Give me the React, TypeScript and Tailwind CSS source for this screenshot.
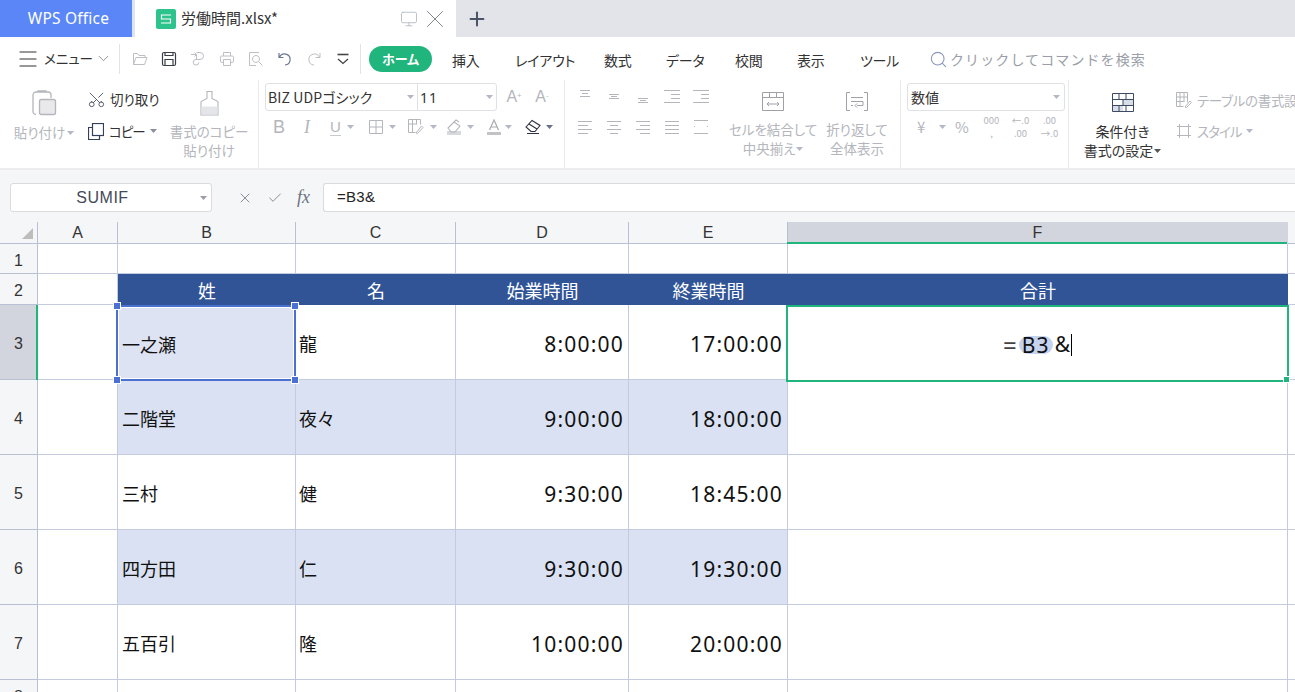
import type { ReactNode } from 'react';
import { Menu, ChevronDown, Monitor, X, Plus, Search, Check, Scissors } from 'lucide-react';

const muted = 'text-[#b4b6bc]';

function Ic({ w = 18, h = 18, children, className = '' }: { w?: number; h?: number; children: ReactNode; className?: string }) {
  return (
    <svg width={w} height={h} viewBox={`0 0 ${w} ${h}`} fill="none" stroke="currentColor" strokeWidth="1" className={`shrink-0 ${className}`}>
      {children}
    </svg>
  );
}

function Caret({ className = 'text-[#b4b8c6]' }: { className?: string }) {
  return (
    <svg width="7" height="4" viewBox="0 0 7 4" className={`shrink-0 ${className}`}>
      <path d="M0 0h7L3.5 4z" fill="currentColor" />
    </svg>
  );
}

function AlignIcon({ lines }: { lines: [number, number, number][] }) {
  return (
    <Ic w={18} h={16}>
      {lines.map(([x1, x2, y], i) => (
        <path key={i} d={`M${x1} ${y}.5H${x2}`} />
      ))}
    </Ic>
  );
}

function QuickBar() {
  return (
    <div className="flex items-center h-[43px] pl-[16px] shrink-0">
      <Menu size={24} strokeWidth={1.2} className="text-[#333]" />
      <span className="ml-[4px] text-[13.5px] text-[#333] w-[45px]">メニュー</span>
      <ChevronDown size={17} strokeWidth={1.1} className="ml-[6px] text-[#777]" />
      <div className="ml-[7px] w-px h-[30px] bg-[#e2e3e6]" />
      <div className="flex items-center gap-[13px] ml-[12px] text-[#bdbfc4]">
        <Ic w={16} h={16}>
          <path d="M1.500 13.500v-11h4l1.500 2h6v2M1.500 13.500l2.500-7h11l-2.500 7z" />
        </Ic>
        <Ic w={16} h={16} className="text-[#3a3d45]">
          <path d="M3 1.500h10a1.500 1.500 0 0 1 1.500 1.500v10a1.500 1.500 0 0 1-1.500 1.500H3A1.500 1.500 0 0 1 1.500 13V3A1.500 1.500 0 0 1 3 1.500zM4 14.500V8.500h8v6M4 1.500v3h8v-3" strokeWidth="1.200" />
        </Ic>
        <Ic w={16} h={16}>
          <path d="M1 3.500h5M4.500 1.500l2 2-2 2M6.500 1.500h3.500a3.500 3.500 0 0 1 0 7H6a2.800 2.800 0 1 0 2.800 2.800M6.500 3.500v5" />
        </Ic>
        <Ic w={16} h={16}>
          <path d="M4.500 5V1.500h7V5M4 11.500H2.800A1.300 1.300 0 0 1 1.500 10.200V6.300A1.300 1.300 0 0 1 2.800 5h10.400a1.300 1.300 0 0 1 1.300 1.300v3.900a1.300 1.300 0 0 1-1.300 1.300H12M4.500 8.500h7v6h-7z" />
        </Ic>
        <Ic w={16} h={16}>
          <path d="M11 1.500H1.500v13H8M8 4.500a3.500 3.500 0 1 0 .01 0zM10.500 10.500l4 4" />
        </Ic>
        <Ic w={16} h={16} className="text-[#6b7690]">
          <path d="M2 2v4.500h4.500M2.500 6.500A5.500 5.500 0 1 1 8 14" strokeWidth="1.200" />
        </Ic>
        <Ic w={16} h={16}>
          <path d="M14 2v4.500H9.500M13.500 6.500A5.500 5.500 0 1 0 8 14" />
        </Ic>
        <Ic w={16} h={16} className="text-[#444]">
          <path d="M2.500 3.500h11" strokeWidth="1.600" />
          <path d="M3 8l5 4.500L13 8" strokeWidth="1.300" />
        </Ic>
      </div>
      <div className="ml-[9px] w-px h-[30px] bg-[#e2e3e6]" />
      <div className="ml-[8px] w-[63px] h-[26px] rounded-full bg-[#1fb57c] text-white text-[13px] font-bold flex items-center justify-center">
        ホーム
      </div>
      <nav className="flex items-center ml-[20px] pt-[3px] text-[14px] text-[#333] tracking-[-0.2px]">
        <span className="w-[63px]">挿入</span>
        <span className="w-[89px]">レイアウト</span>
        <span className="w-[62px]">数式</span>
        <span className="w-[69px]">データ</span>
        <span className="w-[62px]">校閲</span>
        <span className="w-[63px]">表示</span>
        <span className="w-[70px]">ツール</span>
      </nav>
      <div className="flex items-center text-[14px] text-[#9a9ea8] pt-[1px] -ml-[1px]">
        <Search size={19} strokeWidth={1.4} className="text-[#8c9ab8]" />
        <span className="ml-[2px] tracking-[1.1px] [font-feature-settings:normal]">クリックしてコマンドを検索</span>
      </div>
    </div>
  );
}

function ClipboardGroup() {
  return (
    <div className="flex w-[259px] shrink-0 border-r border-[#e9eaec] text-[13.5px] leading-[19px]">
      <div className={`w-[88px] flex flex-col items-center pt-[10px] ${muted}`}>
        <Ic w={26} h={26} className="ml-[-1px]">
          <path d="M5 24.500a3 3 0 0 1-3-3V5a3 3 0 0 1 3-3h12a3 3 0 0 1 3 3v3M7 2V1h8v1" strokeWidth="1.300" />
          <rect x="8.500" y="9.500" width="16" height="15" rx="2" fill="#e9e9ec" strokeWidth="1.300" />
        </Ic>
        <span className="mt-[7px] flex items-center gap-[2px]">
          貼り付け
          <Caret />
        </span>
      </div>
      <div className="w-[72px] flex flex-col pt-[9px] gap-[12px] text-[#333]">
        <div className="flex items-center h-[20px]">
          <Scissors size={19} strokeWidth={1.100} className="-rotate-90 text-[#444a57] -ml-[1px]" />
          <span className="ml-[4px]">切り取り</span>
        </div>
        <div className="flex items-center h-[20px]">
          <Ic w={16} h={17} className="text-[#33405a]">
            <rect x="4.500" y="0.500" width="11" height="12" strokeWidth="1.200" />
            <path d="M4.500 4.500h-4v12h11v-4" strokeWidth="1.200" />
          </Ic>
          <span className="ml-[5px] tracking-[-1px]">コピー</span>
          <Caret className="ml-[5px] text-[#8a8f9c]" />
        </div>
      </div>
      <div className={`flex-1 flex flex-col items-center pt-[11px] ${muted}`}>
        <Ic w={19} h={25}>
          <path d="M7 .500h5v7l5 2.500a1 1 0 0 1 1 1v13H1V11a1 1 0 0 1 1-1l5-2.500z" strokeWidth="1.100" />
          <rect x="1.500" y="15.500" width="16" height="8" fill="#e4e5e8" stroke="none" />
        </Ic>
        <span className="mt-[6px]">書式のコピー</span>
        <span>貼り付け</span>
      </div>
    </div>
  );
}

function FontGroup() {
  return (
    <div className="flex flex-col w-[306px] shrink-0 border-r border-[#e9eaec] pl-[6px] pt-[3px]">
      <div className="flex items-center h-[28px]">
        <div className="flex w-[234px] h-[28px] border border-[#dfe1e5] rounded-[3px] text-[14px] text-[#333]">
          <div className="w-[152px] flex items-center justify-between pl-[2px] pr-[3px] border-r border-[#dfe1e5]">
            <span className="tracking-[0.1px]">BIZ UDPゴシック</span>
            <Caret />
          </div>
          <div className="flex-1 flex items-center justify-between pl-[2px] pr-[3px]">
            <span className="font-['Noto_Sans'] tracking-[1px]">11</span>
            <Caret />
          </div>
        </div>
        <span className={`ml-[9px] w-[29px] text-[16px] font-['Liberation_Sans'] font-light leading-[16px] ${muted}`}>
          A<sup className="text-[8px]">+</sup>
        </span>
        <span className={`w-[29px] text-[16px] font-['Liberation_Sans'] font-light leading-[16px] ${muted}`}>
          A<sup className="text-[8px]">-</sup>
        </span>
      </div>
      <div className={`flex items-center h-[32px] ${muted}`}>
        <span className="w-[26px] pl-[8px] font-['Liberation_Sans'] text-[18px]">B</span>
        <span className="w-[32px] text-center font-['Liberation_Serif'] italic text-[18px]">I</span>
        <div className="w-[40px] pl-[7px] flex items-center gap-[6px]">
          <span className="text-[15px] border-b border-[#c8c9cd] leading-[17px] font-['Liberation_Sans']">U</span>
          <Caret />
        </div>
        <div className="w-[39px] pl-[6px] flex items-center gap-[6px]">
          <Ic w={14} h={14}>
            <path d="M.500 .500h13v13H.500zM7 .500v13M.500 7h13" />
          </Ic>
          <Caret />
        </div>
        <div className="w-[38px] pl-[6px] flex items-center gap-[6px]">
          <Ic w={16} h={16}>
            <path d="M.500 .500h12v5M.500 .500v13h7M.500 5h8M4.500 .500v13M8.500 .500v5M8 14l5.500-7 1.500 1.500-5.500 6z" />
          </Ic>
          <Caret />
        </div>
        <div className="w-[40px] pl-[6px] flex items-center gap-[5px]">
          <Ic w={16} h={17}>
            <rect x="1" y="12" width="14" height="4" fill="#d8d9dc" stroke="none" />
            <path d="M2 9l6-6 6 4-5 6H5zM8 3l2-2 3 2" strokeWidth="1.100" />
          </Ic>
          <Caret />
        </div>
        <div className="w-[39px] pl-[7px] flex items-center gap-[4px] text-[#a8aab0]">
          <Ic w={14} h={17}>
            <path d="M2.500 11l4.500-10 4.500 10M4 8h6" strokeWidth="1.200" />
            <rect x="0" y="13" width="14" height="3" fill="#c2c3c7" stroke="none" />
          </Ic>
          <Caret />
        </div>
        <div className="w-[30px] pl-[6px] flex items-center gap-[4px] text-[#2b3040]">
          <Ic w={17} h={16}>
            <path d="M1 8l6-6.500 8 5-5 6H6zM4 5l8 5M2 14.500h12" strokeWidth="1.100" />
          </Ic>
          <Caret className="text-[#69708a]" />
        </div>
      </div>
    </div>
  );
}

function AlignGroup() {
  const top: [number, number, number][][] = [
    [[4, 14, 2], [6, 12, 5], [4, 14, 8]],
    [[4, 14, 6], [6, 12, 8], [4, 14, 10]],
    [[4, 14, 10], [6, 12, 12], [4, 14, 14]],
    [[1, 17, 2], [8, 17, 6], [8, 17, 10], [1, 17, 14]],
    [[1, 17, 2], [9, 17, 6], [9, 17, 10], [1, 17, 14]],
  ];
  const bottom: [number, number, number][][] = [
    [[2, 16, 2], [2, 12, 6], [2, 16, 10], [2, 12, 14]],
    [[2, 16, 2], [5, 13, 6], [2, 16, 10], [5, 13, 14]],
    [[2, 16, 2], [6, 16, 6], [2, 16, 10], [6, 16, 14]],
    [[2, 16, 2], [2, 16, 6], [2, 16, 10], [2, 16, 14]],
    [[2, 16, 1], [2, 16, 14], [2, 3, 7], [15, 16, 7]],
  ];
  return (
    <div className={`flex w-[336px] shrink-0 border-r border-[#e9eaec] text-[13.5px] leading-[19px] ${muted}`}>
      <div className="w-[155px] pl-[11px] pt-[8px] flex flex-col gap-[15px]">
        <div className="flex gap-[11px]">
          {top.map((l, i) => (
            <AlignIcon key={i} lines={l} />
          ))}
        </div>
        <div className="flex gap-[11px]">
          {bottom.map((l, i) => (
            <AlignIcon key={i} lines={l} />
          ))}
        </div>
      </div>
      <div className="w-[106px] flex flex-col items-center pt-[12px]">
        <Ic w={22} h={19} className="text-[#9fa1a7]">
          <path d="M.500 .500h21v18H.500zM.500 5.500h21M7.500 .500v5M14.500 .500v5M5 12h12M7 10l-2 2 2 2M15 10l2 2-2 2" />
        </Ic>
        <span className="mt-[9px]">セルを結合して</span>
        <span className="flex items-center gap-[1px]">
          中央揃え
          <Caret />
        </span>
      </div>
      <div className="w-[62px] flex flex-col items-center pt-[12px]">
        <Ic w={22} h={19} className="text-[#9fa1a7]">
          <path d="M4 .500H.500v18H4M18 .500h3.500v18H18M5 5.500h12M5 9.500h12v4h-6M7 13.500h-2M11 11.500l-2 2 2 2" />
        </Ic>
        <span className="mt-[9px]">折り返して</span>
        <span>全体表示</span>
      </div>
    </div>
  );
}

function NumberGroup() {
  return (
    <div className="flex flex-col w-[168px] shrink-0 border-r border-[#e9eaec] pl-[6px] pt-[3px]">
      <div className="w-[158px] h-[28px] border border-[#dfe1e5] rounded-[3px] flex items-center justify-between pl-[3px] pr-[4px] text-[14px] text-[#333]">
        <span>数値</span>
        <Caret />
      </div>
      <div className={`flex items-center h-[32px] ${muted}`}>
        <span className="ml-[10px] w-[22px] text-[15px]">¥</span>
        <Caret />
        <span className="ml-[9px] w-[22px] text-[15px]">%</span>
        <span className="w-[29px] text-[9.500px] leading-[13px] text-center">000<br />,</span>
        <span className="w-[29px] text-[9.500px] leading-[13px] text-center">←.0<br />.00</span>
        <span className="w-[29px] text-[9.500px] leading-[13px] text-center">.00<br />→.0</span>
      </div>
    </div>
  );
}

function StyleGroup() {
  return (
    <div className="flex flex-1 min-w-0">
      <div className="w-[107px] shrink-0 flex flex-col items-center pt-[13px] text-[14px] leading-[19px] text-[#333]">
        <Ic w={22} h={19} className="text-[#3d4a63]">
          <rect x="11" y="6" width="10" height="6" fill="#d9dde8" stroke="none" />
          <rect x="1" y="12" width="10" height="6" fill="#d9dde8" stroke="none" />
          <path d="M.500 .500h21v18H.500zM.500 6.500h21M.500 12.500h21M7 .500v6M14 .500v6M11 6.500v6M7 12.500v6M14 12.500v6" />
        </Ic>
        <span className="mt-[10px]">条件付き</span>
        <span className="flex items-center gap-[1px]">
          書式の設定
          <Caret className="text-[#555]" />
        </span>
      </div>
      <div className={`flex flex-col pt-[10px] gap-[11px] text-[13.5px] tracking-[-0.3px] ${muted}`}>
        <div className="flex items-center h-[20px] gap-[5px]">
          <Ic w={16} h={16}>
            <path d="M.500 .500h11v10M.500 .500v14h7M.500 5h11M.500 9.500h8M4 .500v14M8 .500v9M9 15l5-6 1.500 1.500-5 5z" />
          </Ic>
          <span>テーブルの書式設</span>
        </div>
        <div className="flex items-center h-[20px] gap-[5px]">
          <Ic w={16} h={16}>
            <path d="M3.500 1v14M12.500 1v14M1 3.500h14M1 12.500h14" />
          </Ic>
          <span className="tracking-[-1px]">スタイル</span>
          <Caret />
        </div>
      </div>
    </div>
  );
}

function FormulaBar() {
  return (
    <div className="h-[54px] shrink-0 flex items-start pt-[13px] pl-[10px] bg-[#f5f6f8] border-t-[2px] border-[#ececee]">
      <div className="w-[202px] h-[29px] bg-white border border-[#d9dbdf] rounded-[3px] flex items-center pr-[4px]">
        <span className="flex-1 text-center pr-[6px] text-[16px] text-[#444a57] font-['Liberation_Sans'] tracking-[0.5px]">SUMIF</span>
        <Caret className="text-[#9a9ea8]" />
      </div>
      <div className="w-[111px] h-[29px] flex items-center pl-[25px] text-[#6b7280]">
        <X size={16} strokeWidth={1.200} />
        <Check size={16} strokeWidth={1.200} className="ml-[14px]" />
        <span className="ml-[14px] font-['Liberation_Serif'] italic text-[18px]">fx</span>
      </div>
      <div className="flex-1 h-[29px] bg-white border border-[#d9dbdf] rounded-l-[3px] border-r-0 flex items-center pl-[13px] text-[15px] tracking-[0.3px] text-[#222] font-['Liberation_Sans']">
        =B3&amp;
      </div>
    </div>
  );
}

const colLetters = ['A', 'B', 'C', 'D', 'E', 'F', ''];
const people = [
  { row: 3, last: '一之瀬', first: '龍', start: '8:00:00', end: '17:00:00' },
  { row: 4, last: '二階堂', first: '夜々', start: '9:00:00', end: '18:00:00' },
  { row: 5, last: '三村', first: '健', start: '9:30:00', end: '18:45:00' },
  { row: 6, last: '四方田', first: '仁', start: '9:30:00', end: '19:30:00' },
  { row: 7, last: '五百引', first: '隆', start: '10:00:00', end: '20:00:00' },
];
const line = 'border-r border-b border-[#c4cbdf]';
const rowHead = 'flex items-center justify-center pt-[4px] bg-[#f5f6f8] border-r border-b border-[#b9c0d4] text-[16px] text-[#333] font-["Liberation_Sans"]';

function Sheet() {
  return (
    <div className="relative flex-1 min-h-0 overflow-hidden">
      <div className="grid grid-cols-[38px_80px_178px_160px_173px_159px_500px_8px] grid-rows-[22px_30px_31px_75px_75px_75px_75px_75px_30px]">
        <div className="relative bg-[#f5f6f8] border-b border-r border-[#b9c0d4]">
          <div className="absolute right-[4px] bottom-[4px] w-0 h-0 border-l-[11px] border-l-transparent border-b-[11px] border-b-[#bdbdbd]" />
        </div>
        {colLetters.map((c) => (
          <div
            key={c || 'g'}
            className={`flex items-center justify-center text-[16px] text-[#333] font-['Liberation_Sans'] border-r border-b ${
              c === 'F' ? 'bg-[#d2d5dd] border-[#d2d5dd]' : 'bg-[#f5f6f8] border-[#b9c0d4]'
            }`}
          >
            {c}
          </div>
        ))}

        <div className={rowHead}>1</div>
        {colLetters.map((c) => (
          <div key={c || 'g'} className={line} />
        ))}

        <div className={rowHead}>2</div>
        <div className={line} />
        {['姓', '名', '始業時間', '終業時間', '合計'].map((h) => (
          <div key={h} className="bg-[#305496] text-white text-[18px] pt-[2px] flex items-center justify-center">
            {h}
          </div>
        ))}
        <div className={line} />

        {people.map((p) => {
          const band = p.row === 4 || p.row === 6 ? 'bg-[#d9e1f2]' : '';
          const text = `${line} ${band} flex items-center pt-[2px] text-[18px] text-[#111]`;
          const time = `${line} ${band} flex items-center justify-end pt-[5px] pr-[4px] text-[21px] tracking-[1.2px] text-[#111] font-['Noto_Sans']`;
          return (
            <div key={p.row} className="contents">
              <div className={`${rowHead} ${p.row === 3 ? '!bg-[#d2d5dd]' : ''}`}>{p.row}</div>
              <div className={line} />
              <div className={`${text} pl-[4px]`}>{p.last}</div>
              <div className={`${text} pl-[3px]`}>{p.first}</div>
              <div className={time}>{p.start}</div>
              <div className={time}>{p.end}</div>
              <div className={line} />
              <div className={line} />
            </div>
          );
        })}

        <div className={rowHead}>8</div>
        {colLetters.map((c) => (
          <div key={c || 'g'} className={line} />
        ))}
      </div>

      {/* 選択セル B3 */}
      <div className="absolute left-[116px] top-[83px] w-[180px] h-[76px] border-2 border-[#4a70d2] bg-[#dde3f3] flex items-center pl-[4px] pt-[2px] text-[18px] text-[#111] outline outline-1 -outline-offset-3 outline-white">
        一之瀬
        <span className="absolute -left-[4px] -top-[4px] w-[6px] h-[6px] bg-[#4a70d2] outline outline-1 outline-white" />
        <span className="absolute -right-[4px] -top-[4px] w-[6px] h-[6px] bg-[#4a70d2] outline outline-1 outline-white" />
        <span className="absolute -left-[4px] -bottom-[4px] w-[6px] h-[6px] bg-[#4a70d2] outline outline-1 outline-white" />
        <span className="absolute -right-[4px] -bottom-[4px] w-[6px] h-[6px] bg-[#4a70d2] outline outline-1 outline-white" />
      </div>

      {/* 編集中のセル F3 */}
      <div className="absolute left-[786px] top-[83px] w-[503px] h-[77px] border-2 border-[#1fb57c] bg-white flex items-center justify-center pt-[2px] text-[21px] text-[#111] font-['Noto_Sans']">
        <span className="text-[#444] text-[24px] leading-[24px]">=</span>
        <span className="ml-[2px] px-[3px] rounded-full bg-[#c5d3ef] leading-[18px] tracking-[1.2px]">B3</span>
        <span className="ml-[2px]">&amp;</span>
        <span className="ml-[1px] w-px h-[22px] bg-black" />
        <span className="absolute -right-[2px] -bottom-[2px] w-[5px] h-[5px] bg-[#1fb57c] outline outline-1 outline-white" />
      </div>

      <div className="absolute left-[787px] top-[20px] w-[500px] h-[2px] bg-[#1fb57c]" />
      <div className="absolute left-[36px] top-[83px] w-[2px] h-[75px] bg-[#1fb57c]" />
    </div>
  );
}

export default function App() {
  return (
    <div className="w-[1295px] h-[692px] overflow-hidden flex flex-col bg-white whitespace-nowrap font-['Noto_Sans_CJK_JP',sans-serif] [font-feature-settings:'palt']">
      <div className="flex h-[37px] shrink-0 bg-[#e3e4e9]">
        <div className="w-[132px] pl-[5px] bg-[#5b86f7] text-white text-[15.500px] tracking-[0.2px] flex items-center justify-center font-['Noto_Sans']">
          WPS Office
        </div>
        <div className="w-[3px] bg-[#dde3f3]" />
        <div className="w-[321px] bg-white flex items-center pl-[21px]">
          <div className="w-[20px] h-[20px] rounded-[2px] bg-[#2dc38c] text-white flex items-center justify-center">
            <Ic w={12} h={10}>
              <path d="M11 1H1.500v4h9v4H1" strokeWidth="1.200" />
            </Ic>
          </div>
          <span className="ml-[5px] w-[219px] text-[15px] text-[#333]">労働時間.xlsx*</span>
          <Monitor size={18} strokeWidth={1} className="shrink-0 text-[#a9aeb9]" />
          <X size={30} strokeWidth={0.8} className="shrink-0 ml-[2px] text-[#80858f]" />
        </div>
        <Plus size={22} strokeWidth={2.200} className="ml-[10px] mt-[8px] text-[#4a5367]" />
      </div>

      <QuickBar />

      <div className="flex h-[88px] shrink-0">
        <ClipboardGroup />
        <FontGroup />
        <AlignGroup />
        <NumberGroup />
        <StyleGroup />
      </div>

      <FormulaBar />
      <Sheet />
    </div>
  );
}
